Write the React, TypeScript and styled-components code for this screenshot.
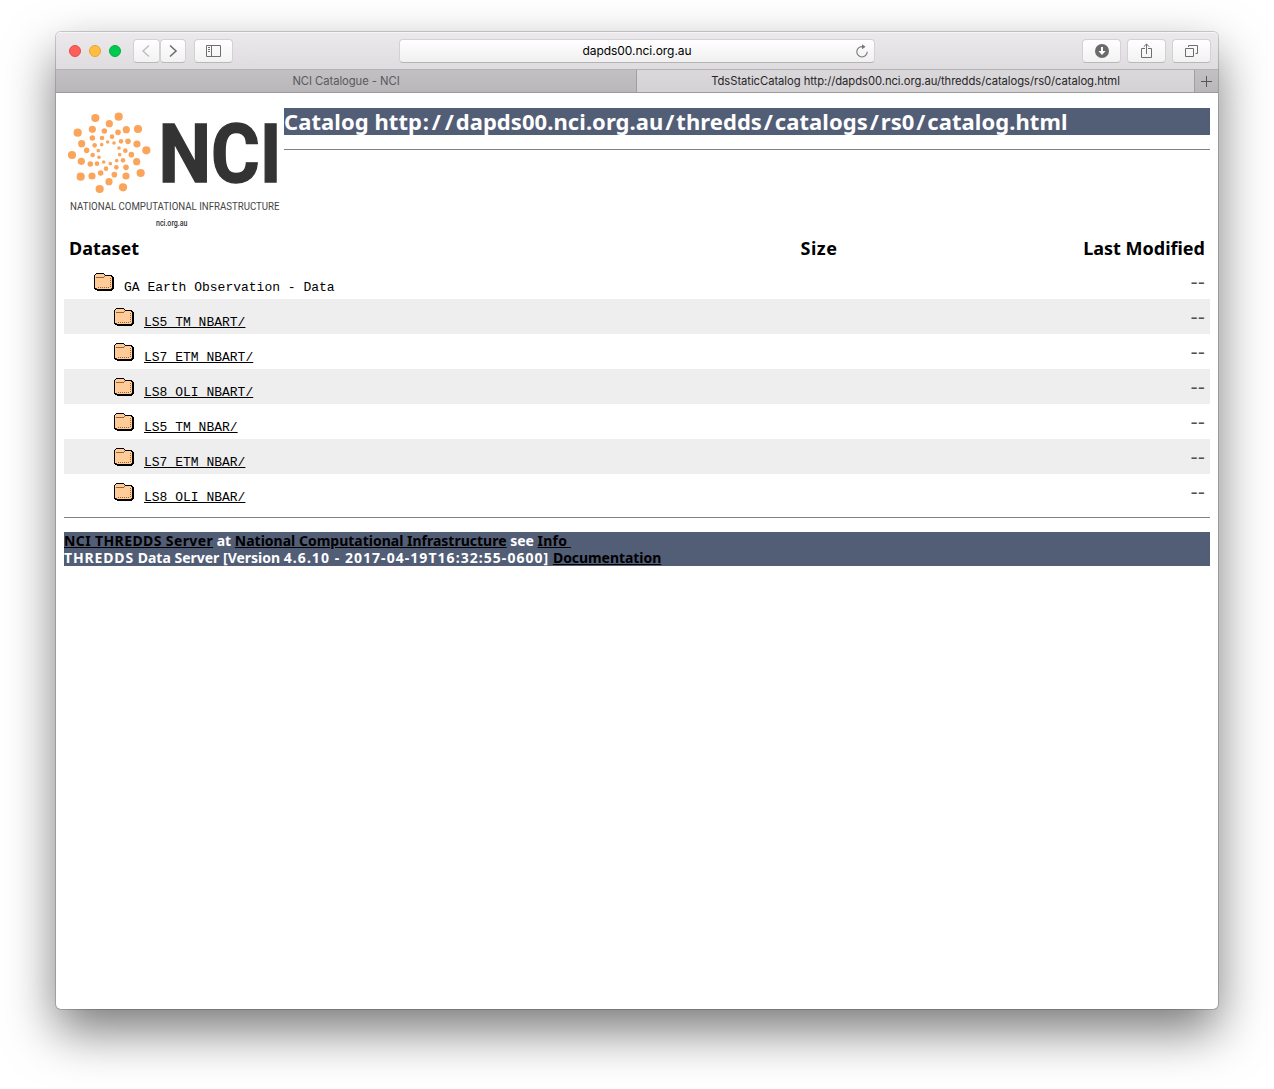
import React from "react";
import styled, { createGlobalStyle } from "styled-components";

const Global = createGlobalStyle`
  * { box-sizing: border-box; }
  html, body { margin: 0; padding: 0; background: #fff; }
  body { overflow: hidden; }
`;

const Desktop = styled.div`
  width: 1274px;
  height: 1089px;
  padding: 32px 56px 80px;
  overflow: hidden;
  background: #fff;
`;

const Window = styled.div`
  display: flex;
  flex-direction: column;
  width: 1162px;
  height: 977px;
  border-radius: 5px;
  background: #fff;
  box-shadow: 0 0 0 1px rgba(0, 0, 0, 0.18), 0 22px 50px rgba(0, 0, 0, 0.53);
`;

const Toolbar = styled.header`
  display: grid;
  grid-template-columns: 343px 476px 1fr;
  align-items: center;
  height: 37px;
  padding: 0 7px 1px 0;
  border-radius: 5px 5px 0 0;
  border-top: 1px solid #f6f5f6;
  background: linear-gradient(#ebe9eb, #dfdce0);
`;

const ToolGroup = styled.div<{ $end?: boolean }>`
  display: flex;
  align-items: center;
  justify-content: ${(p) => (p.$end ? "flex-end" : "flex-start")};
  gap: ${(p) => (p.$end ? "6px" : "0")};
  padding-left: ${(p) => (p.$end ? "0" : "13px")};
`;

const Light = styled.span<{ $fill: string; $edge: string }>`
  width: 12px;
  height: 12px;
  margin-right: 8px;
  border-radius: 50%;
  background: ${(p) => p.$fill};
  border: 1px solid ${(p) => p.$edge};
`;

const ToolButton = styled.button<{ $width: number; $left?: number }>`
  display: flex;
  align-items: center;
  justify-content: center;
  width: ${(p) => p.$width}px;
  height: 24px;
  margin: 0 0 0 ${(p) => p.$left ?? 0}px;
  padding: 0;
  border: 1px solid #d3d1d4;
  border-bottom-color: #bab8bb;
  border-radius: 4px;
  background: linear-gradient(#fff, #f3f2f3);
  color: #6e6e6e;
  svg { display: block; }
`;

const Address = styled.div`
  display: grid;
  grid-template-columns: 24px 1fr 24px;
  align-items: center;
  height: 24px;
  border: 1px solid #d3d1d4;
  border-bottom-color: #b5b3b6;
  border-radius: 4px;
  background: linear-gradient(#fff, #f1f0f1);
  color: #000;
  font: 12px/22px Inter, "Liberation Sans", sans-serif;
  letter-spacing: -0.04px;
  text-align: center;
  svg { justify-self: center; }
`;

const Tabs = styled.nav`
  display: grid;
  grid-template-columns: 581px 558px 23px;
  height: 24px;
  border-top: 1px solid #b3b1b4;
  border-bottom: 1px solid #9c9a9d;
`;

const Tab = styled.div<{ $active?: boolean }>`
  display: flex;
  align-items: center;
  justify-content: center;
  border-right: 1px solid #a09ea1;
  background: ${(p) => (p.$active ? "linear-gradient(#dbd8dc, #d5d2d6)" : "linear-gradient(#c2c0c3, #b9b7ba)")};
  color: ${(p) => (p.$active ? "#262626" : "#5a595b")};
  font: 11.25px/22px Inter, "Liberation Sans", sans-serif;
  letter-spacing: -0.055px;
  &:last-child { border-right: 0; }
`;

const Page = styled.main`
  flex: 1;
  padding: 15px 8px 0;
  font-family: "Noto Sans", sans-serif;
  color: #000;
`;

const Masthead = styled.div`
  display: grid;
  grid-template-columns: 220px 1fr;
  height: 125px;
`;

const Title = styled.h1`
  height: 27px;
  margin: 0 0 14px;
  background: #525d76;
  color: #fff;
  font: bold 22px/27px "Noto Sans", sans-serif;
  letter-spacing: 0.06px;
  white-space: nowrap;
`;

const Mark = styled.span<{ $pad: number }>`
  padding: 0 ${(p) => p.$pad}px;
`;

const Rule = styled.hr`
  height: 1px;
  margin: 0;
  border: 0;
  background: #808080;
`;

const Listing = styled.div`
  display: flex;
  flex-direction: column;
  margin-bottom: 8px;
`;

const Row = styled.div<{ $shade?: boolean; $head?: boolean }>`
  display: grid;
  grid-template-columns: 640px 220px 1fr;
  align-items: start;
  height: ${(p) => (p.$head ? 31 : 35)}px;
  padding: 0 5px;
  background: ${(p) => (p.$shade ? "#eee" : "transparent")};
`;

const Heading = styled.span<{ $align?: string; $gap?: number }>`
  font: bold 18px/30px "Noto Sans", sans-serif;
  letter-spacing: ${(p) => p.$gap ?? 0}px;
  text-align: ${(p) => p.$align ?? "left"};
`;

const Entry = styled.div<{ $depth: number }>`
  display: flex;
  padding: 9px 0 0 ${(p) => 5 + p.$depth * 20}px;
  gap: 10px;
`;

const EntryName = styled.span<{ $link?: boolean }>`
  padding-top: 7px;
  font: 13px/15px "Liberation Mono", monospace;
  text-decoration: ${(p) => (p.$link ? "underline" : "none")};
  text-decoration-skip-ink: none;
  white-space: pre;
`;

const Modified = styled.span`
  grid-column: 3;
  padding-top: 8px;
  color: #525252;
  font: 20px/20px "DejaVu Sans", sans-serif;
  text-align: right;
`;

const Footer = styled.footer`
  height: 34px;
  margin-top: 14px;
  background: #525d76;
  color: #fff;
  font: bold 14px/17px "Noto Sans", sans-serif;
  white-space: pre;
`;

const FooterLine = styled.div`
  height: 17px;
`;

const Spaced = styled.span<{ $gap: number }>`
  letter-spacing: ${(p) => p.$gap}px;
`;

const FooterLink = styled.a<{ $gap?: number }>`
  color: #000;
  letter-spacing: ${(p) => p.$gap ?? 0}px;
  text-decoration: underline;
`;

const LogoDrawing = styled.svg`
  display: block;
  overflow: visible;
`;

const DOT_RINGS: { r: number; at: [number, number][] }[] = [
  { r: 4.1, at: [[100, 36], [170, 32], [47, 80], [228, 69], [30, 147], [253, 133], [56, 212], [236, 201], [113, 249], [183, 244]] },
  { r: 3.6, at: [[91, 70], [142, 53], [59, 113], [193, 71], [58, 166], [225, 114], [90, 210], [224, 167], [141, 227], [192, 210]] },
  { r: 2.8, at: [[91, 96], [127, 75], [74, 133], [168, 79], [85, 174], [198, 106], [116, 201], [208, 146], [157, 206], [192, 184]] },
  { r: 2.3, at: [[98, 118], [120, 96], [92, 147], [150, 92], [105, 173], [177, 106], [132, 188], [190, 134], [163, 184], [183, 163]] },
  { r: 1.8, at: [[119, 116], [137, 108], [109, 134], [156, 111], [111, 154], [171, 126], [125, 168], [173, 146], [145, 173], [164, 164]] },
];

const Logo = () => (
  <LogoDrawing width="220" height="125" viewBox="0 0 220 125">
    {DOT_RINGS.map((ring) =>
      ring.at.map(([x, y]) => (
        <circle key={`${x}-${y}`} cx={x / 3 - 2} cy={y / 3 - 2} r={ring.r} fill="#fba55c" />
      ))
    )}
    <text x="94.500" y="73.8" fontFamily="Roboto" fontWeight="700" fontSize="82" fill="#333" stroke="#333" strokeWidth="1.4" textLength="123" lengthAdjust="spacingAndGlyphs">NCI</text>
    <text x="6" y="102" fontFamily="Roboto" fontSize="10" fill="#444" textLength="209.5" lengthAdjust="spacingAndGlyphs">NATIONAL COMPUTATIONAL INFRASTRUCTURE</text>
    <text x="92" y="118" fontFamily="Roboto" fontWeight="500" fontSize="8.6" fill="#333" textLength="31.5" lengthAdjust="spacingAndGlyphs">nci.org.au</text>
  </LogoDrawing>
);

const Folder = () => (
  <svg width="20" height="18" viewBox="0 0 20 18" shapeRendering="crispEdges">
    <path d="M2 0h8v1h1v1h7v1h1v1h1v12h-1v1h-1v1H3v-1H1v-1H0V2h1V1h1z" fill="#000" />
    <path d="M2 1h8v1h1v1h6v1h1v11h-1v1H2v-1H1V2h1z" fill="#ffcc99" />
    <path d="M2 4h8v1H2zM10 3h1v1h-1z" fill="#996633" />
    <path d="M16.500 5v10M4 14.500h12" fill="none" stroke="#996633" strokeDasharray="1 1" />
    <path d="M17 15h1v1h-1zM2 15h1v1H2z" fill="#4d3319" />
  </svg>
);

const entries: string[] = ["LS5_TM_NBART/", "LS7_ETM_NBART/", "LS8_OLI_NBART/", "LS5_TM_NBAR/", "LS7_ETM_NBAR/", "LS8_OLI_NBAR/"];

const CATALOG = "Catalog http://dapds00.nci.org.au/thredds/catalogs/rs0/catalog.html";

export default function App() {
  return (
    <Desktop>
      <Global />
      <Window>
        <Toolbar>
          <ToolGroup>
            <Light $fill="#ff5f5a" $edge="#e94b47" />
            <Light $fill="#ffbe41" $edge="#e6a534" />
            <Light $fill="#00ca4e" $edge="#00b03f" />
            <ToolButton $width={27} $left={4}>
              <svg width="12" height="14" viewBox="0 0 12 14" fill="none" stroke="#bdbdbd" strokeWidth="1.4"><path d="M8 1.5L2 7l6 5.5" /></svg>
            </ToolButton>
            <ToolButton $width={26}>
              <svg width="10" height="14" viewBox="0 0 10 14" fill="none" stroke="#6e6e6e" strokeWidth="1.6"><path d="M2 1.5L8 7l-6 5.500" /></svg>
            </ToolButton>
            <ToolButton $width={39} $left={8}>
              <svg width="15" height="12" viewBox="0 0 15 12" fill="none" stroke="currentColor"><path d="M.5.5h14v11H.5zM5.5.5v11M2 2.5h2M2 4.5h2M2 6.5h2" /></svg>
            </ToolButton>
          </ToolGroup>
          <Address>
            <span />
            <span>dapds00.nci.org.au</span>
            <svg width="14" height="14" viewBox="0 0 14 14" fill="none" stroke="#777" strokeWidth="1.1">
              <path d="M8.200 2.600H7a5.200 5.200 0 1 0 5.200 5.200" /><path d="M7 .2v5L10.600 2.800z" fill="#777" stroke="none" />
            </svg>
          </Address>
          <ToolGroup $end>
            <ToolButton $width={39}>
              <svg width="14" height="14" viewBox="0 0 14 14"><circle cx="7" cy="7" r="7" fill="#6a6a6a" /><path d="M6 3h2v4h2.6L7 10.9 3.4 7H6z" fill="#fff" /></svg>
            </ToolButton>
            <ToolButton $width={39}>
              <svg width="11" height="16" viewBox="0 0 11 16" fill="none" stroke="currentColor"><path d="M4 5.500H.5v9h10v-9H7M5.500 11V1M2.800 3.700L5.500 1l2.700 2.700" /></svg>
            </ToolButton>
            <ToolButton $width={39}>
              <svg width="13" height="12" viewBox="0 0 13 12" fill="none" stroke="currentColor"><path d="M.5 3.500h8v8h-8zM3.500 2V.5h9v8h-2" /></svg>
            </ToolButton>
          </ToolGroup>
        </Toolbar>
        <Tabs>
          <Tab>NCI Catalogue - NCI</Tab>
          <Tab $active>TdsStaticCatalog http://dapds00.nci.org.au/thredds/catalogs/rs0/catalog.html</Tab>
          <Tab>
            <svg width="11" height="11" viewBox="0 0 11 11" stroke="#555"><path d="M5.500 0v11M0 5.500h11" /></svg>
          </Tab>
        </Tabs>
        <Page>
          <Masthead>
            <Logo />
            <div>
              <Title>
                {CATALOG.split(/([:/])/).map((part, i) =>
                  part === "/" || part === ":" ? (
                    <Mark key={i} $pad={part === "/" ? 1.85 : 0.85}>{part}</Mark>
                  ) : (
                    part
                  )
                )}
              </Title>
              <Rule />
            </div>
          </Masthead>
          <Listing>
            <Row $head>
              <Heading>Dataset</Heading>
              <Heading $align="center" $gap={0.5}>Size</Heading>
              <Heading $align="right">Last Modified</Heading>
            </Row>
            <Row>
              <Entry $depth={1}><Folder /><EntryName>GA Earth Observation - Data</EntryName></Entry>
              <Modified>--</Modified>
            </Row>
            {entries.map((name, i) => (
              <Row key={name} $shade={i % 2 === 0}>
                <Entry $depth={2}><Folder /><EntryName $link>{name}</EntryName></Entry>
                <Modified>--</Modified>
              </Row>
            ))}
          </Listing>
          <Rule />
          <Footer>
            <FooterLine><FooterLink $gap={0.39}>NCI THREDDS Server</FooterLink> at <FooterLink>National Computational Infrastructure</FooterLink> see <FooterLink $gap={0.2}>Info </FooterLink></FooterLine>
            <FooterLine><Spaced $gap={0.86}>THREDDS</Spaced> Data Server [Version <Spaced $gap={1.05}>4.6.10 - 2017-04-19T16:32:55-0600]</Spaced> <FooterLink $gap={-0.06}>Documentation</FooterLink></FooterLine>
          </Footer>
        </Page>
      </Window>
    </Desktop>
  );
}
